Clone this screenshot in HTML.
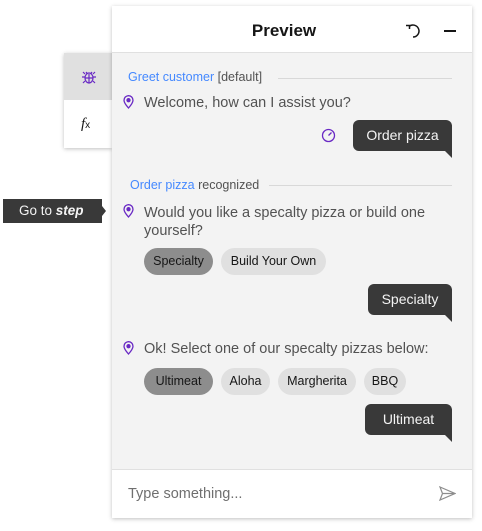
<!DOCTYPE html>
<html><head><style>
*{margin:0;padding:0;box-sizing:border-box}
body{width:482px;height:531px;background:#fff;font-family:"Liberation Sans",sans-serif;position:relative;overflow:hidden;color:#525252}
.a{position:absolute}
.panel{left:112px;top:6px;width:360px;height:512px;background:#f3f3f3;box-shadow:0 1px 4px rgba(0,0,0,.25)}
.hdr{left:0;top:0;width:360px;height:47px;background:#fff;border-bottom:1px solid #e0e0e0}
.ftr{left:0;top:463px;width:360px;height:49px;background:#fff;border-top:1px solid #e0e0e0}
.bub{background:#393939;color:#f4f4f4;font-size:14px;line-height:31px;text-align:center;border-radius:6px 6px 0 6px}
.bub:after{content:"";position:absolute;right:0;bottom:-7px;border-top:7px solid #393939;border-left:7px solid transparent}
.chip{height:27px;border-radius:14px;background:#e0e0e0;color:#161616;font-size:12.5px;line-height:27px;text-align:center}
.sel{background:#8d8d8d}
.msg{font-size:14.5px;color:#525252}
.lbl{font-size:12.5px}
.blue{color:#4589ff}
.ln{height:1px;background:#d8d8d8}
</style></head><body>
<div class="a" style="left:64px;top:53px;width:48px;height:95px;background:#fff;box-shadow:0 1px 4px rgba(0,0,0,.25)"></div>
<div class="a" style="left:64px;top:53px;width:48px;height:47px;background:#e0e0e0"></div>
<svg class="a" style="left:81px;top:69px" width="16" height="16" viewBox="0 0 16 16" fill="none" stroke="#6929c4" stroke-width="1.2"><ellipse cx="8" cy="9" rx="4" ry="5"/><path d="M5 3l1.5 2M11 3l-1.5 2M4 8H1M15 8h-3M4 12l-2 2M12 12l2 2M4 5L2 3M12 5l2-2M8 5v9M4 9h8"/></svg>
<div class="a" style="left:81px;top:116px;font-family:'Liberation Serif',serif;font-style:italic;font-size:15px;color:#161616">f<span style="font-size:10px;font-style:normal;font-family:'Liberation Sans'">x</span></div>

<div class="a" style="left:3px;top:199px;width:99px;height:24px;background:#393939;color:#f4f4f4;font-size:13.5px;line-height:24px;padding-left:16px">Go to <b><i>step</i></b></div>
<div class="a" style="left:102px;top:206px;border-left:4px solid #393939;border-top:5px solid transparent;border-bottom:5px solid transparent"></div>

<div class="a panel">
 <div class="a hdr"><div class="a" style="left:0;width:344px;top:15px;text-align:center;font-weight:bold;font-size:17px;color:#161616">Preview</div>
 <svg class="a" style="left:292px;top:16px" width="18" height="18" viewBox="0 0 18 18" fill="none" stroke="#161616" stroke-width="1.5"><path d="M5 4.5A6 6 0 1 1 9 15"/><path d="M2 3.5h3.5v3.5"/></svg>
 <div class="a" style="left:332px;top:24px;width:12px;height:1.5px;background:#161616"></div>
 </div>
 <div class="a lbl" style="left:16px;top:64px"><span class="blue">Greet customer</span> [default]</div>
 <div class="a ln" style="left:166px;top:72px;width:174px"></div>
 <svg class="a" style="left:11px;top:89px" width="11" height="14" viewBox="0 0 11 14" fill="none" stroke="#6929c4" stroke-width="1.3"><path d="M5.5 13C2 9 1 7 1 5.2a4.5 4.5 0 0 1 9 0C10 7 9 9 5.5 13z"/><circle cx="5.5" cy="5.2" r="1.5" fill="#6929c4"/></svg>
 <div class="a msg" style="left:32px;top:89px">Welcome, how can I assist you?</div>
 <svg class="a" style="left:209px;top:122px" width="15" height="15" viewBox="0 0 15 15" fill="none" stroke="#6929c4" stroke-width="1.3"><circle cx="7.5" cy="7.5" r="6"/><path d="M7.5 7.5l3-3"/></svg>
 <div class="a bub" style="left:241px;width:99px;top:114px">Order pizza</div>
 <div class="a lbl" style="left:18px;top:172px"><span class="blue">Order pizza</span> recognized</div>
 <div class="a ln" style="left:157px;top:179px;width:183px"></div>
 <svg class="a" style="left:11px;top:198px" width="11" height="14" viewBox="0 0 11 14" fill="none" stroke="#6929c4" stroke-width="1.3"><path d="M5.5 13C2 9 1 7 1 5.2a4.5 4.5 0 0 1 9 0C10 7 9 9 5.5 13z"/><circle cx="5.5" cy="5.2" r="1.5" fill="#6929c4"/></svg>
 <div class="a msg" style="left:32px;top:198px;width:300px;line-height:18px">Would you like a specalty pizza or build one yourself?</div>
 <div class="a chip sel" style="left:32px;top:242px;width:69px">Specialty</div>
 <div class="a chip" style="left:109px;top:242px;width:105px">Build Your Own</div>
 <div class="a bub" style="left:256px;width:84px;top:278px">Specialty</div>
 <svg class="a" style="left:11px;top:335px" width="11" height="14" viewBox="0 0 11 14" fill="none" stroke="#6929c4" stroke-width="1.3"><path d="M5.5 13C2 9 1 7 1 5.2a4.5 4.5 0 0 1 9 0C10 7 9 9 5.5 13z"/><circle cx="5.5" cy="5.2" r="1.5" fill="#6929c4"/></svg>
 <div class="a msg" style="left:32px;top:335px">Ok! Select one of our specalty pizzas below:</div>
 <div class="a chip sel" style="left:32px;top:362px;width:69px">Ultimeat</div>
 <div class="a chip" style="left:109px;top:362px;width:49px">Aloha</div>
 <div class="a chip" style="left:166px;top:362px;width:78px">Margherita</div>
 <div class="a chip" style="left:252px;top:362px;width:42px">BBQ</div>
 <div class="a bub" style="left:253px;width:87px;top:398px">Ultimeat</div>
 <div class="a ftr"><div class="a" style="left:16px;top:16px;font-size:14.5px;color:#6f6f6f">Type something...</div>
 <svg class="a" style="left:327px;top:16px" width="17" height="15" viewBox="0 0 17 15" fill="none" stroke="#8d8d8d" stroke-width="1.2"><path d="M1 1l15 6.5L1 14l2.5-6.5zM3.5 7.5H16"/></svg></div>
</div>
</body></html>
